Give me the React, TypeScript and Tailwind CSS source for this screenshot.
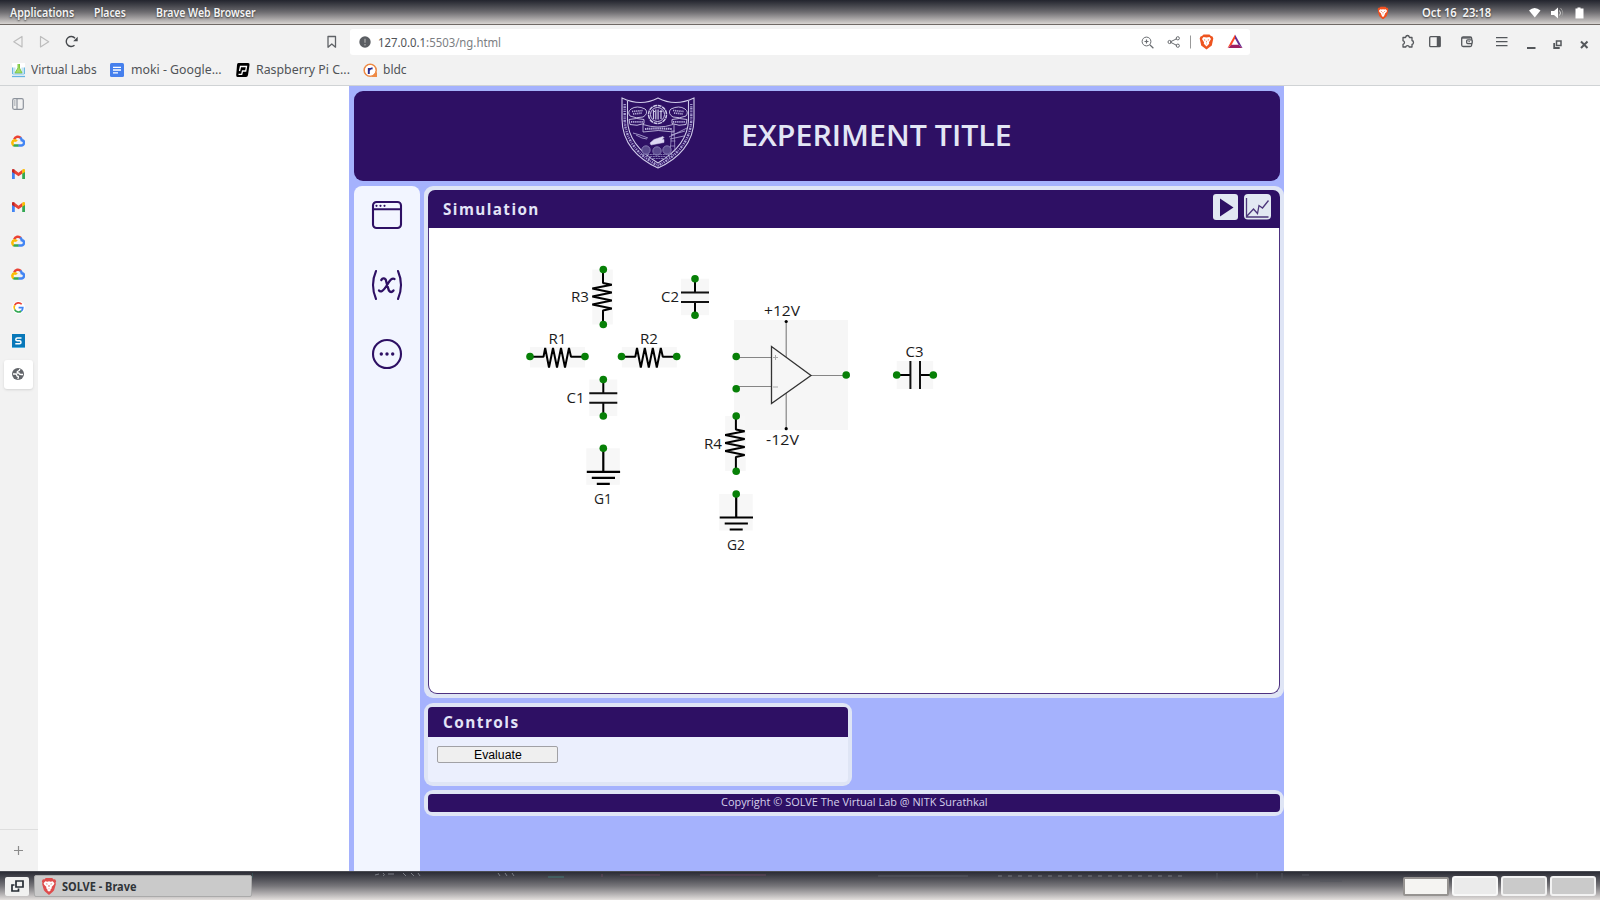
import React from "react";

const UI = "font-['Noto_Sans',sans-serif]";
const NU = "font-['Open_Sans',sans-serif]";

// Text run stretched horizontally to a fixed width.
function T({ w, className = "", children }: { w: number; className?: string; children: React.ReactNode }) {
  const ref = React.useRef<HTMLSpanElement>(null);
  const [sx, setSx] = React.useState(1);
  React.useLayoutEffect(() => {
    if (ref.current) setSx(w / ref.current.offsetWidth);
  }, [w]);
  return (
    <span className="inline-block shrink-0" style={{ width: w }}>
      <span ref={ref} className={"inline-block origin-left whitespace-pre " + className} style={{ transform: `scaleX(${sx})` }}>
        {children}
      </span>
    </span>
  );
}

function Brave({ size, color = "#f1501f" }: { size: number; color?: string }) {
  return (
    <svg width={size} height={size * 1.12} viewBox="0 0 16 18">
      <path d="M4.8 1h6.4l1.5 1.4 1.4-.1 1.1 2-.6 1.5.3 1.300-1.800 6.200-1.300 1.600L8 18l-3.800-3.100-1.300-1.600L1.100 7.100l.3-1.300L.8 4.300l1.100-2 1.400.1z" fill={color} />
      <path d="M4.300 4.200l2.100.5L8 4.200l1.600.5 2.100-.5 1.700 2.100-.6 1.600-2.200 2.100.3 1.200-1.500 1L10 13 8 14.800 6 13l.6-.8-1.500-1 .3-1.200-2.200-2.100-.6-1.600z" fill="#fff" />
      <path d="M4.500 6.500l2.100.4-.5 1zM11.500 6.500l-2.100.4.5 1zM7.600 8h.8l.2 1.600-.6.500-.6-.5zM7 11.700l1 .5 1-.5z" fill={color} />
    </svg>
  );
}

function Cloud() {
  return (
    <svg width="14" height="12" viewBox="0 0 14 12" fill="none" strokeWidth="2.500">
      <path d="M3.200 4.400A4 4 0 0 1 9.900 3" stroke="#ea4335" />
      <path d="M9.300 2.600a4 4 0 0 1 1.400 2.600 2.600 2.600 0 0 1-.5 5.200H7.200" stroke="#4285f4" />
      <path d="M7.500 10.500H3.700a2.600 2.600 0 0 1-1.500-.5" stroke="#34a853" />
      <path d="M2.600 10.100A2.700 2.700 0 0 1 3.500 5.200c1 0 1.800.4 2.300 1.100" stroke="#fbbc05" />
    </svg>
  );
}

function Gmail() {
  return (
    <svg width="13" height="10" viewBox="0 0 13 10">
      <path d="M0 1.500V10h2.800V4z" fill="#4285f4" />
      <path d="M13 1.500V10h-2.800V4z" fill="#34a853" />
      <path d="M2.600.8L6.500 3.800 10.400.8v3.600L6.500 7.300 2.600 4.400z" fill="#ea4335" />
      <path d="M0 3V1.200C0 0 1.500-.4 2.800.8v3.900z" fill="#c5221f" />
      <path d="M13 3V1.200C13 0 11.500-.4 10.200.8v3.900z" fill="#fbbc04" />
    </svg>
  );
}

function Google() {
  return (
    <svg width="13" height="13" viewBox="0 0 13 13">
      <circle cx="6.500" cy="6.500" r="6.500" fill="#fff" />
      <g fill="none" strokeWidth="1.700">
        <path d="M2.700 4.200A4.300 4.300 0 0 1 9.700 3.300" stroke="#ea4335" />
        <path d="M2.700 8.600a4.300 4.300 0 0 1 0-4.400" stroke="#fbbc05" />
        <path d="M9.300 10a4.300 4.300 0 0 1-6.600-1.400" stroke="#34a853" />
        <path d="M6.600 6.700h4.200a4.300 4.300 0 0 1-1.500 3.300" stroke="#4285f4" />
      </g>
    </svg>
  );
}

const rail: { key: string; icon: React.ReactNode }[] = [
  { key: "cloud-1", icon: <Cloud /> },
  { key: "mail-1", icon: <Gmail /> },
  { key: "mail-2", icon: <Gmail /> },
  { key: "cloud-2", icon: <Cloud /> },
  { key: "cloud-3", icon: <Cloud /> },
  { key: "search", icon: <Google /> },
  {
    key: "s",
    icon: (
      <svg width="13" height="14" viewBox="0 0 13 14">
        <path d="M0 0h13v14H0z" fill="#0878b9" />
        <path d="M0 13h13v1H0z" fill="#52b2df" />
        <path d="M9.500 4H5.300c-2 0-2 2.800 0 2.800h2.200c2 0 2 3 0 3H3.300" fill="none" stroke="#fff" strokeWidth="1.500" />
      </svg>
    ),
  },
];

function TopBar() {
  return (
    <div className={`${UI} flex h-[25px] shrink-0 items-center border-b border-[#6f6965] bg-linear-to-b from-[#23252e] via-[#6d6c70] to-[#d8d4d1] text-[12px] font-semibold text-[#f4f4f4] [text-shadow:0_1px_2px_#333]`}>
      <div className="flex h-full w-[1379px] items-center pt-[2px] pl-[10px]">
        <T w={64}>Applications</T>
        <div className="w-5" />
        <T w={32}>Places</T>
        <div className="w-[30px]" />
        <T w={100}>Brave Web Browser</T>
      </div>
      <div className="-ml-[2px] flex w-[43px] items-center pt-px"><Brave size={12} /></div>
      <div className="w-[2px]" />
      <div className="pt-[2px]"><T w={69}>Oct 16  23:18</T></div>
      <svg className="mt-px ml-[38px]" width="58" height="14" viewBox="0 0 58 14">
        <path d="M0 4.500Q5.500-.5 11.500 4.500L5.800 11.500z" fill="#fff" />
        <path d="M22 5h3l4-3.500v11L25 9h-3z" fill="#fff" />
        <path d="M30.500 4.500q2 2.500 0 5" stroke="#ddd" fill="none" />
        <path d="M31.500 2q4.500 5 0 10" stroke="#999" fill="none" />
        <path d="M46.500 2.500h2V1.500h3v1h3v10h-8z" fill="#fff" />
      </svg>
    </div>
  );
}

function Toolbar() {
  return (
    <div className={`${UI} flex h-[61px] shrink-0 flex-col border-b border-[#d0d3d5] bg-[#f2f2f2] text-[#505357]`}>
      <div className="flex h-[33px] items-center">
        <svg className="shrink-0" width="350" height="33" viewBox="0 0 350 33" fill="none">
          <path d="M22 11.500v10.500L13.800 16.800zM40.500 11.500v10.500L48.700 16.800z" stroke="#bdbdbd" strokeWidth="1.200" strokeLinejoin="round" />
          <path d="M74.500 20.300A5 5 0 1 1 75 13.200" stroke="#45484c" strokeWidth="1.400" />
          <path d="M73.200 16.200h4.500v-4.500z" fill="#45484c" />
          <path d="M328 11.500h7.500v10.700l-3.700-3.200-3.800 3.200z" stroke="#5f6266" strokeWidth="1.300" strokeLinejoin="round" />
        </svg>
        <div className="flex h-[26px] w-[900px] shrink-0 items-center rounded-[3px] bg-white pl-[9px]">
          <svg width="12" height="12" viewBox="0 0 12 12"><circle cx="6" cy="6" r="5.700" fill="#5b5e63" /><path d="M6 2.800v4M6 8v1.400" stroke="#a8a8a8" strokeWidth="1.300" /></svg>
          <div className="w-[7px]" />
          <div className="pb-[2px]"><T w={123} className="text-[12px]">127.0.0.1<span className="text-[#7b7e82]">:5503/ng.html</span></T></div>
          <svg className="ml-auto" width="116" height="26" viewBox="0 0 116 26" fill="none" stroke="#696c70">
            <circle cx="12.500" cy="12.500" r="4.400" /><path d="M15.800 15.800l3.600 3.500M10.500 12.500h4M12.500 10.500v4" strokeWidth="1.200" />
            <path d="M36 13l7-3.400M36 13l7 3.500" /><circle cx="35.600" cy="13" r="1.600" /><circle cx="43.800" cy="9.300" r="1.600" /><circle cx="43.800" cy="16.700" r="1.600" />
            <path d="M56.500 6.500v13" stroke="#999" />
            <path d="M93 17.300L101 5l8 12.300z" fill="#fff" stroke="none" />
            <path d="M101 5.500l-7.500 13.500 4-3 3.500-6.500z" fill="#ff4724" stroke="none" />
            <path d="M94 19h14.500l-4-3.200h-7z" fill="#9e1f63" stroke="none" />
            <path d="M101 5.500L108.500 19l-4-3.200-3.500-6.300z" fill="#662d91" stroke="none" />
            <g transform="translate(66 5)" stroke="none">
              <path d="M3.500.5h6L11 2l1.500.4L13.300 4.500l-1.500 7L6.500 15.500 1.200 11.500l-1.500-7L.5 2.400 2 2z" fill="#ee541f" />
              <path d="M3.500 3l3 .6 3-.6 1.500 2-2 3.200.2 1.600-2.700 2.700-2.700-2.700.2-1.600L2 5z" fill="#fff" />
              <path d="M3.800 5.200l1.500.6L5 7zM9.200 5.200l-1.500.6L8 7zM5.900 9.700h1.200l-.6.800zM6.300 6.800h.4l.2 1.400h-.8z" fill="#ee541f" />
            </g>
          </svg>
        </div>
        <svg className="shrink-0" width="350" height="33" viewBox="0 0 350 33" fill="none" stroke="#54575b" strokeWidth="1.300">
          <path d="M153 12.500h2.500q.5-2 2-2t2 2h2.500v3q1.500.3 1.500 2t-1.500 2v2.500h-2.700q-.3-1.300-1.800-1.300t-1.800 1.300h-2.700v-2.700q1.500-.5 1.500-1.800t-1.500-1.800z" strokeLinejoin="round" />
          <rect x="179.700" y="11.700" width="10.500" height="10" rx="1" /><path d="M188.500 11v11" strokeWidth="3.500" />
          <rect x="211.700" y="12" width="10" height="9.500" rx="1.500" /><path d="M211.700 13h9" /><rect x="216.700" y="14.800" width="5.500" height="3.800" rx="1" fill="#f2f2f2" /><path d="M218.500 16.700h1.200" />
          <path d="M246 12.700h11.500M246 16.700h11.500M246 20.700h11.500" />
          <path d="M277 23h8.500" strokeWidth="2" />
          <path d="M306.500 16h4.500v4.500h-4.500z" strokeWidth="1.500" /><path d="M304.200 18v5h5.500" strokeWidth="1.800" />
          <path d="M331 16.500l6.500 6.500M337.500 16.500L331 23" strokeWidth="2" />
        </svg>
      </div>
      <div className="flex h-[24px] items-center pl-[11px] text-[13px]">
        <svg width="15" height="15" viewBox="0 0 15 15"><path d="M1 0h13v12H1z" fill="#fff" /><path d="M1.500 4.500h3V10h-3zM10.500 4.500h3V10h-3z" fill="#c4e4f3" /><path d="M7 1v4l-3 5h7L8.500 5V1" stroke="#7cc83f" fill="#a6da6c" /><path d="M1.500 4.500V11h12V4.500" stroke="#6db7e0" fill="none" /><path d="M1 13.500h13" stroke="#65b3e2" strokeWidth="1.300" /></svg>
        <div className="w-[5px]" /><T w={66}>Virtual Labs</T>
        <svg className="ml-[13px]" width="14" height="14" viewBox="0 0 14 14"><rect width="14" height="14" rx="1.500" fill="#4680ed" /><path d="M3 4.300h8M3 7h8M3 9.800h5" stroke="#fff" strokeWidth="1.300" /></svg>
        <div className="w-[7px]" /><T w={91}>moki - Google...</T>
        <svg className="ml-[14px]" width="14" height="14" viewBox="0 0 14 14"><path d="M2.500 0H12q2 0 1.500 2L12 12q-.3 2-2 2H1.500Q0 14 .2 12L1 2q0-2 1.500-2z" /><path d="M3.500 8L4.500 3.500h6L9.700 8H6.500L5.700 11.300H2.500" fill="none" stroke="#fff" strokeWidth="1.300" /></svg>
        <div className="w-[6px]" /><T w={94}>Raspberry Pi C...</T>
        <svg className="ml-[13px]" width="15" height="15" viewBox="0 0 15 15"><circle cx="7.200" cy="7.300" r="6" fill="#fff" stroke="#ee8a45" strokeWidth="1.600" /><path d="M8 14h6V9" fill="#ee8a45" /><circle cx="7.200" cy="7.300" r="5" fill="#fff" /><path d="M5.800 11V5M5.800 7.500Q7 5 9.600 5.500" stroke="#29298d" strokeWidth="1.900" fill="none" /></svg>
        <div className="w-[5px]" /><T w={24}>bldc</T>
      </div>
    </div>
  );
}

function SideRail() {
  return (
    <div className="flex w-[38px] shrink-0 flex-col bg-[#f2f2f2]">
      <div className="flex h-[38px] items-center pb-[2px] pl-3">
        <svg width="12" height="12" viewBox="0 0 12 12" fill="none" stroke="#8d939c" strokeWidth="1.200"><rect x=".7" y=".7" width="10.600" height="10.600" rx="1.500" /><path d="M5 1v10M2 3h1.500M2 5h1.500M2 7h1.500" /></svg>
      </div>
      {rail.map((r) => (
        <div key={r.key} className="flex h-[33.400px] w-[36px] items-center justify-center">{r.icon}</div>
      ))}
      <div className="mt-[2px] ml-1 flex h-[29px] w-[29px] items-center justify-center rounded-[3px] bg-white pr-px shadow-sm">
        <svg width="12" height="12" viewBox="0 0 12 12"><circle cx="6" cy="6" r="6" fill="#62656a" /><path d="M7.800 1Q7.800 2.800 6 3.200 4.800 3.600 5.200 5h1.600q.4 1.500 2.200 1.500h2M1 6h2.500q1.300 0 1.300 1.300T6.300 8.500q.4 1.200-.6 2.500" fill="none" stroke="#fff" strokeWidth="1.300" /></svg>
      </div>
      <div className="mt-auto flex h-[42px] items-center justify-center border-t border-[#dedede] pr-[2px] pb-px">
        <svg width="9" height="9" viewBox="0 0 9 9"><path d="M4.500 0v9M0 4.500h9" stroke="#8b8b8b" strokeWidth="1.200" /></svg>
      </div>
    </div>
  );
}

function Emblem() {
  return (
    <svg className="shrink-0" width="74" height="72" viewBox="0 0 74 72" fill="none" stroke="#cfcbe9">
      <path d="M1 1Q20 10 37 1Q54 10 73 1V22C73 46 57 62 37 71C17 62 1 46 1 22z" strokeWidth="1.100" />
      <path d="M6.500 4V23C7 43 22 57 37 66C52 57 67 43 67.500 23V4" strokeWidth="1.100" />
      <path d="M3.700 7V22C4 45 20 60 37 68.500C54 60 70 45 70.300 22V7" stroke="#a69cd0" strokeWidth="2.400" strokeDasharray="1.200 1 2 .8 .7 1.100" />
      <circle cx="36.500" cy="17.500" r="9" strokeWidth="1.500" strokeDasharray="4 .7" /><circle cx="36.500" cy="17.500" r="7" strokeWidth="1" />
      <path d="M32.500 13v9M34.800 12.500v10M37.100 12.500v10M40 13v9M32 14.500h2M38.500 14.500h3" strokeWidth="1.200" />
      <path d="M24 12q-8-4-14 0q-4 3-1 7 6 3 13 1 5-3 3-7zM50 12q8-4 14 0q4 3 1 7-6 3-13 1-5-3-3-7zM8 22.500q8-2 15 0v4q-7 3-14 1zM66 22.500q-8-2-15 0v4q7 3 14 1z" strokeWidth=".9" />
      <path d="M11 14.500l11-1M12 17l9-1M52 13.500l11 1M53 16l9 1M10 24.800h12M52 24.800h12" stroke="#b9b1dc" strokeWidth="1.700" strokeDasharray="1.300 .8" />
      <path d="M22 27.500q15 5 30 0M22 35q15-3 31 0M22 27v8M53 27v8" strokeWidth=".8" />
      <path d="M24 32q13-1 27 0" stroke="#b9b1dc" strokeWidth="2" strokeDasharray="1.500 .6" />
      <path d="M12 36l7 2 8 3M15 38l6 3 5 1M48 40l18-9M50 38l14-4M49 42l14-3" stroke="#b9b1dc" strokeWidth=".8" />
      <path d="M29 46l4-3.500 9-3 1 1-2 2h2v3l-13 2.500z" fill="#ddd8f3" strokeWidth=".5" />
      <path d="M51 33l-2 22M53 33l1 22M50 38h4M49.500 44h5M49 49h5" stroke="#aaa1d0" strokeWidth=".7" />
      <g stroke="#9088bb" fill="#5a4a8d" strokeWidth=".8"><circle cx="25" cy="53" r="4.200" /><circle cx="36" cy="54" r="4.200" /><circle cx="46" cy="53" r="4.200" /></g>
      <path d="M21 57.500h32M24 59.500h26M27 61.500h20" stroke="#8178af" strokeWidth="1" strokeDasharray="2 .6" />
    </svg>
  );
}

const dots = [
  [530, 356.500], [585, 356.500], [621.500, 356.500], [676.700, 356.500], [603.300, 269.500], [603.300, 324.500], [695, 278.700], [695, 315.300],
  [603.300, 379.500], [603.300, 416], [603.300, 448.300], [736.200, 356.500], [736.200, 388.700], [736.200, 416], [736.200, 471.200], [736.200, 494],
  [846.200, 375], [896.700, 375], [933.300, 375],
];

function Resistor({ x, y, vertical = false }: { x: number; y: number; vertical?: boolean }) {
  return (
    <g transform={vertical ? `translate(${x} ${y}) rotate(90)` : `translate(${x} ${y})`}>
      <rect x="0" y="-9.500" width="55" height="20.500" fill="#f7f7f7" />
      <path d="M0 .3H13.500L15.200 -8.500L19 11L23 -8.500L27 11L31 -8.500L35 11L39 -8.500L41 .3H55" fill="none" stroke="#000" strokeWidth="2" strokeLinejoin="bevel" />
    </g>
  );
}

function Capacitor({ x, y, vertical = false }: { x: number; y: number; vertical?: boolean }) {
  return (
    <g transform={vertical ? `translate(${x} ${y}) rotate(90)` : `translate(${x} ${y})`}>
      <rect x="0" y="-14" width="36.500" height="28" fill="#f7f7f7" />
      <path d="M0 0H13.700M23.300 0H36.500" stroke="#000" strokeWidth="2" />
      <path d="M13.700 -14V14M23.300 -14V14" stroke="#111" strokeWidth="2" />
    </g>
  );
}

function Ground({ x, y }: { x: number; y: number }) {
  return (
    <g transform={`translate(${x} ${y})`}>
      <rect x="-17" y="0" width="33.500" height="36.500" fill="#f7f7f7" />
      <path d="M0 0V23.500M-16.500 23.500H16.800M-11.500 29.500H11.700M-6.500 35.500H6.500" stroke="#000" strokeWidth="2.200" />
    </g>
  );
}

const labels: [string, number, number, number][] = [
  ["R3", 571, 302, 18], ["C2", 661, 302, 18], ["R1", 548.500, 343.600, 18], ["R2", 640, 343.600, 18], ["C1", 566.500, 403, 18],
  ["R4", 704, 448.600, 18], ["G1", 594, 503.600, 18], ["G2", 727, 549.500, 18], ["C3", 905.500, 357, 18], ["+12V", 764, 316.300, 36], ["-12V", 766, 444.600, 33],
];

function Circuit() {
  return (
    <svg width="850" height="465" viewBox="429 228 850 465">
      <rect x="734" y="320" width="114" height="110" fill="#f6f6f6" />
      <Resistor x={530} y={356.500} />
      <Resistor x={621.800} y={356.500} />
      <Resistor x={603.300} y={269.500} vertical />
      <Resistor x={736.200} y={416} vertical />
      <Capacitor x={695} y={278.700} vertical />
      <Capacitor x={603.300} y={379.500} vertical />
      <Capacitor x={896.700} y={375} />
      <Ground x={603.300} y={448.300} />
      <Ground x={736.200} y={494} />
      <path d="M736 357.500H771M736 386.500H771M811 375.500H846M786.200 321V357M786.200 393V429" stroke="#858585" strokeWidth="1.200" />
      <path d="M771.500 346.500V403.500L811 375.500z" fill="none" stroke="#333" strokeWidth="1.300" />
      <path d="M773 357.500H778M775.500 355V360M773 387H778" stroke="#aaa" strokeWidth="1" />
      <circle cx="786.200" cy="321.500" r="1.600" /><circle cx="786.200" cy="428.700" r="1.600" />
      {dots.map(([x, y], i) => <circle key={i} cx={x} cy={y} r="3.800" fill="#078007" />)}
      {labels.map(([t, x, y, w]) => (
        <text key={t} x={x} y={y} textLength={w} lengthAdjust="spacingAndGlyphs" fontSize="15" fontFamily="Open Sans, sans-serif" fill="#1b1b1b">{t}</text>
      ))}
    </svg>
  );
}

function Experiment() {
  return (
    <div className={`${NU} flex w-[935px] shrink-0 flex-col bg-[#a5b2fd] pt-[5px] pl-[5px]`}>
      <div className="flex h-[90px] w-[926px] shrink-0 items-start rounded-[9px] bg-[#2e1064] pt-[6px] pl-[267px]">
        <Emblem />
        <div className="w-[46px]" />
        <div className="flex h-[78px] items-center"><T w={271} className="text-[29px] leading-none font-semibold text-[#e3e6f5]">EXPERIMENT TITLE</T></div>
      </div>
      <div className="mt-[5px] flex min-h-0 grow">
        <div className="flex w-[66px] shrink-0 flex-col items-center rounded-t-[8px] bg-[#f2f5ff]">
          <svg className="mt-[14px]" width="32" height="170" viewBox="0 0 32 170" fill="none" stroke="#2e1064" strokeWidth="2.100" strokeLinecap="round">
            <rect x="2" y="2" width="28" height="26" rx="3.500" /><path d="M2 9.300h28" />
            <g fill="#2e1064" stroke="none"><circle cx="5.500" cy="5.800" r="1.100" /><circle cx="9.500" cy="5.800" r="1.100" /><circle cx="13.500" cy="5.800" r="1.100" /></g>
            <path d="M5 71Q-1 85 5 99M27 71Q33 85 27 99" />
            <path d="M10.300 80q2-3 4.400-.5 1.300 5.500 3.200 11 2.200 3 4.600 0M23.500 79q-3-1.500-6.500 4.500t-6 7.500q-1.800 1-3-.5" strokeWidth="2.300" />
            <circle cx="16" cy="154" r="14" />
            <g fill="#2e1064" stroke="none"><circle cx="10.300" cy="154" r="1.700" /><circle cx="16" cy="154" r="1.700" /><circle cx="21.700" cy="154" r="1.700" /></g>
          </svg>
        </div>
        <div className="ml-1 flex w-[860px] flex-col">
          <div className="flex h-[512px] shrink-0 flex-col rounded-[9px] bg-[#dfe5f5] p-1">
            <div className="flex h-[38px] shrink-0 items-center rounded-t-[7px] bg-[#2e1064] pr-[9px] pl-[15px]">
              <div className="pb-px"><T w={97} className="text-[16px] font-bold tracking-[1.500px] text-[#e3e4f7]">Simulation</T></div>
              <svg className="-mt-[4px] ml-auto" width="58" height="26" viewBox="0 0 58 26">
                <rect width="25" height="26" rx="3" fill="#e2e8f2" /><path d="M7 4.500v18l13.500-9z" fill="#2e1064" />
                <rect x="31" width="27" height="25.500" rx="4" fill="#e2e8f2" />
                <path d="M33.500 4v19h22M34 22l6.500-7 4 4.500 1.500-8 3.500 2.500L55.500 6.500" fill="none" stroke="#4c367b" strokeWidth="1.300" />
              </svg>
            </div>
            <div className="grow overflow-hidden rounded-b-[9px] border border-t-0 border-[#4d3180] bg-white"><Circuit /></div>
          </div>
          <div className="mt-[5px] flex h-[83px] w-[428px] shrink-0 flex-col rounded-[9px] bg-[#dfe5f5] p-1">
            <div className="flex h-[30px] items-center rounded-t-[4px] bg-[#2e1064] pl-[15px]"><T w={77} className="text-[16px] font-bold tracking-[1.500px] text-[#e3e4f7]">Controls</T></div>
            <div className="grow rounded-b-[4px] bg-[#ebeffd] pt-[9px] pl-[9px]">
              <button className="flex h-[17px] w-[121px] items-center justify-center rounded-[2px] border border-[#a1a1a5] bg-[#efefef] font-['Liberation_Sans',sans-serif] text-[12px] leading-none text-black"><T w={48}>Evaluate</T></button>
            </div>
          </div>
          <div className="mt-1 flex h-[26px] shrink-0 rounded-[9px] bg-[#dfe5f5] p-1">
            <div className="flex grow items-center justify-center rounded-[4px] bg-[#2e1064] pb-[2px] text-[11.500px] leading-none text-[#d5d0ec]"><T w={267}>Copyright © SOLVE The Virtual Lab @ NITK Surathkal</T></div>
          </div>
        </div>
      </div>
    </div>
  );
}

function TaskBar() {
  return (
    <div className="flex h-[29px] shrink-0 items-center border-t border-[#4a4b52] bg-linear-to-b from-[#2b2c35] via-[#77767a] to-[#e4e0de] pr-[4px] pl-[5px]">
      <div className="flex h-[19px] w-6 items-center justify-center rounded-[2px] bg-[#f1f1f0]">
        <svg width="13" height="12" viewBox="0 0 13 12" fill="none" stroke="#262c33" strokeWidth="1.700"><path d="M5 1h7v6H5zM3.500 5H1v6h6.500V8.500" /></svg>
      </div>
      <div className={`${UI} ml-[5px] flex h-[22px] w-[218px] items-center rounded-[2px] border border-[#aaa] bg-[#cacaca] pl-[6px] text-[12px] font-bold text-[#303438]`}>
        <Brave size={16} color="#df4c4c" /><div className="w-[5px]" /><div className="pt-[2px]"><T w={74}>SOLVE - Brave</T></div>
      </div>
      <svg className="self-start" width="1100" height="10" viewBox="252 0 1100 10" fill="none" strokeWidth="1">
        <path d="M375 3l4-1M383 1q3 2 0 3M388 2h6M403 1l3 3M411 1l3 3M418 1l2 3M498 1l2 3M505 1l2 3M512 1l2 3" stroke="#7a7d85" />
        <path d="M252 1v5" stroke="#3d6866" /><path d="M548 5h16" stroke="#437875" />
        <path d="M602 2v3M620 3h40M700 3h66" stroke="#66495f" />
        <path d="M878 4h90" stroke="#5b5c64" /><path d="M998 4h185" stroke="#74767c" strokeDasharray="4 6" />
        <path d="M1217 1v7M1222 8h10M1257 1v7M1282 1v7M1302 3h7M1320 9h22" stroke="#52555d" />
      </svg>
      <div className="ml-auto flex items-center gap-[3px]">
        <div className="h-[19px] w-[46px] rounded-[2px] border-2 border-[#969391] bg-[#f5f4f2]" />
        <div className="h-[20px] w-[46px] rounded-[3px] border-2 border-[#f8f8f8] bg-[#ebebeb]" />
        <div className="h-[20px] w-[46px] rounded-[3px] border-2 border-[#f2f2f2] bg-[#cacaca]" />
        <div className="h-[20px] w-[46px] rounded-[3px] border-2 border-[#f2f2f2] bg-[#cacaca]" />
      </div>
    </div>
  );
}

export default function App() {
  return (
    <div className="flex h-[900px] w-[1600px] flex-col overflow-hidden bg-white">
      <TopBar />
      <Toolbar />
      <div className="flex min-h-0 grow">
        <SideRail />
        <div className="w-[311px] shrink-0" />
        <Experiment />
      </div>
      <TaskBar />
    </div>
  );
}
